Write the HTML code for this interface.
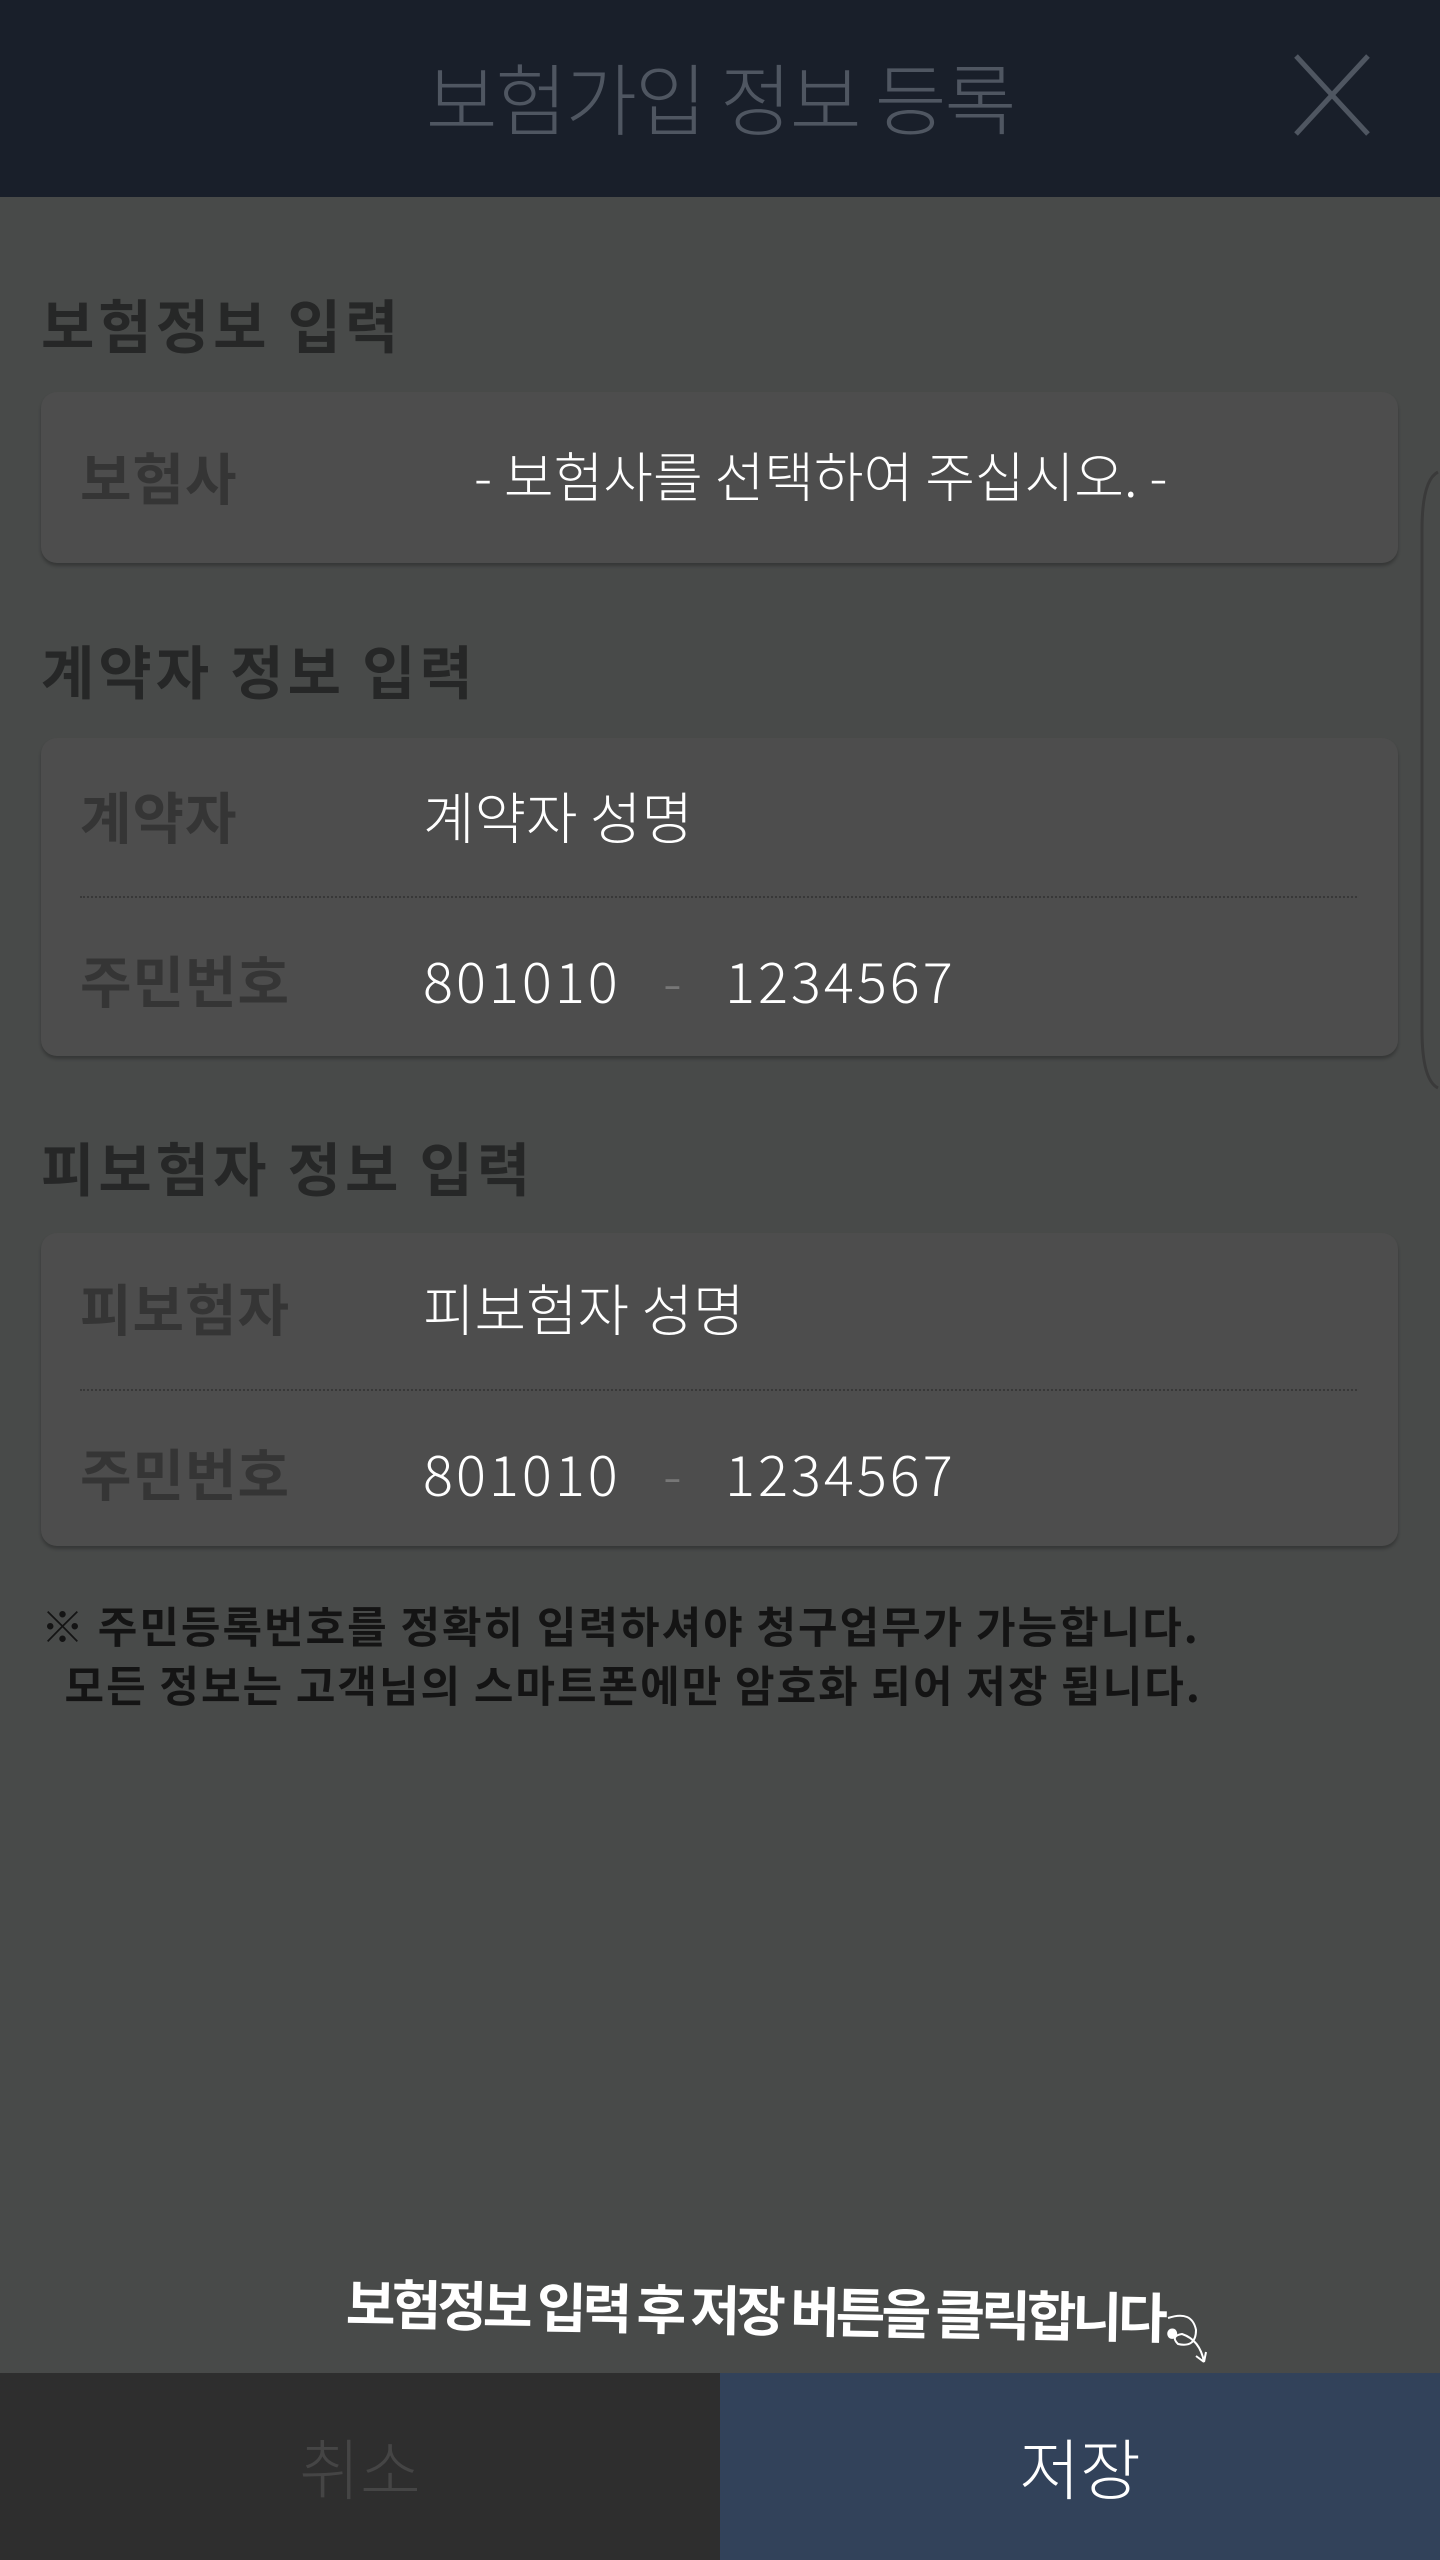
<!DOCTYPE html>
<html><head><meta charset="utf-8"><style>
*{margin:0;padding:0;box-sizing:border-box}
body{width:1440px;height:2560px;background:#484a49;font-family:"Liberation Sans","Noto Sans CJK KR",sans-serif;position:relative;overflow:hidden}
.hdr{position:absolute;left:0;top:0;width:1440px;height:197px;background:#191f2a}
.hdr .t{position:absolute;left:0;width:1440px;top:40px;text-align:center;font-size:78px;color:#4f5661;font-family:"Noto Sans CJK KR",sans-serif;font-weight:300;letter-spacing:-2px}
.sec{position:absolute;left:41px;font-size:58px;font-weight:bold;color:#262727;font-family:"Noto Sans CJK KR",sans-serif;letter-spacing:4px}
.card{position:absolute;left:41px;width:1357px;background:#4d4d4d;border-radius:16px;box-shadow:0 3px 3px rgba(0,0,0,.25)}
.lbl{position:absolute;left:39px;font-size:56px;font-weight:bold;color:#353535;font-family:"Noto Sans CJK KR",sans-serif;line-height:80px;letter-spacing:1px}
.val{position:absolute;font-size:56px;color:#fff;font-family:"Noto Sans CJK KR",sans-serif;line-height:80px;font-weight:300}
.num{letter-spacing:3px}
.dash{color:#777}
.div{position:absolute;left:39px;right:41px;border-top:2px dotted #383838}
.note{position:absolute;left:41px;top:1596px;font-size:43px;font-weight:bold;color:#141414;font-family:"Noto Sans CJK KR",sans-serif;line-height:59px;letter-spacing:2px}
.hand{position:absolute;left:346px;top:2268px;font-size:54px;color:#fff;font-weight:bold;font-family:"Noto Sans CJK KR",sans-serif;letter-spacing:-4px;transform:rotate(1deg)}
.btnl{position:absolute;left:0;top:2373px;width:720px;height:187px;background:#2e2e2e;color:#454545;font-size:66px;text-align:center;line-height:187px;font-family:"Noto Sans CJK KR",sans-serif;font-weight:300}
.btnr{position:absolute;left:720px;top:2373px;width:720px;height:187px;background:#32425a;color:#fff;font-size:66px;text-align:center;line-height:187px;font-family:"Noto Sans CJK KR",sans-serif;font-weight:300}
</style></head><body>
<div class="hdr"><div class="t">보험가입 정보 등록</div>
<svg style="position:absolute;left:1292px;top:52px" width="80" height="86"><path d="M4 4L76 82M76 4L4 82" stroke="#4f5661" stroke-width="5" fill="none"/></svg></div>

<div class="sec" style="top:281px">보험정보 입력</div>
<div class="card" style="top:392px;height:171px">
<div class="lbl" style="top:45px">보험사</div>
<div class="val" style="left:433px;top:42px;font-size:54px">- 보험사를 선택하여 주십시오. -</div>
</div>
<svg style="position:absolute;left:1418px;top:470px" width="22" height="620"><path d="M20 2Q4 10 4 60L4 560Q4 610 20 618" stroke="#3a3a3a" stroke-width="3" fill="none"/></svg>

<div class="sec" style="top:627px">계약자 정보 입력</div>
<div class="card" style="top:738px;height:318px">
<div class="lbl" style="top:38px">계약자</div>
<div class="val" style="left:382px;top:38px">계약자 성명</div>
<div class="div" style="top:158px"></div>
<div class="lbl" style="top:202px">주민번호</div>
<div class="val num" style="left:382px;top:202px">801010</div>
<div class="val dash" style="left:622px;top:202px">-</div>
<div class="val num" style="left:684px;top:202px">1234567</div>
</div>

<div class="sec" style="top:1124px">피보험자 정보 입력</div>
<div class="card" style="top:1233px;height:313px">
<div class="lbl" style="top:35px">피보험자</div>
<div class="val" style="left:382px;top:35px">피보험자 성명</div>
<div class="div" style="top:156px"></div>
<div class="lbl" style="top:200px">주민번호</div>
<div class="val num" style="left:382px;top:200px">801010</div>
<div class="val dash" style="left:622px;top:200px">-</div>
<div class="val num" style="left:684px;top:200px">1234567</div>
</div>

<div class="note">※ 주민등록번호를 정확히 입력하셔야 청구업무가 가능합니다.<br>&nbsp;&nbsp;모든 정보는 고객님의 스마트폰에만 암호화 되어 저장 됩니다.</div>

<div class="hand">보험정보 입력 후 저장 버튼을 클릭합니다.</div>
<svg style="position:absolute;left:1162px;top:2310px" width="50" height="60"><path d="M6 8Q30 0 34 20Q34 38 16 34Q8 26 20 24Q38 30 42 52M42 52L34 46M42 52L44 42" stroke="#fff" stroke-width="2" fill="none"/></svg>

<div class="btnl">취소</div>
<div class="btnr">저장</div>
</body></html>
